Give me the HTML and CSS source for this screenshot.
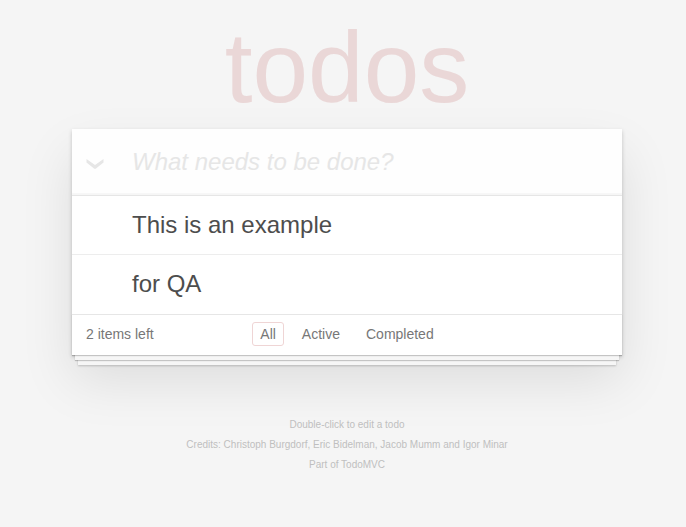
FILE: index.html
```html
<!DOCTYPE html>
<html lang="en">
<head>
<meta charset="utf-8">
<meta name="viewport" content="width=device-width, initial-scale=1">
<title>TodoMVC</title>
<link rel="stylesheet" href="styles.css">
</head>
<body>
<section class="todoapp">
  <h1 class="title">todos</h1>
  <div class="card">
    <header class="entry">
      <button class="toggle-all" type="button" aria-label="Mark all as complete">
        <svg width="18" height="11" viewBox="0 0 18 11" aria-hidden="true"><path d="M0.5 0 L9 6 L17.5 0 V3.5 L10 9.5 Q9 10.3 8 9.5 L0.5 3.5 Z" fill="#e6e6e6"/></svg>
      </button>
      <input class="new-todo" type="text" placeholder="What needs to be done?" aria-label="New todo">
    </header>
    <ul class="todo-list">
      <li class="todo">This is an example</li>
      <li class="todo">for QA</li>
    </ul>
    <footer class="footer">
      <span class="count">2 items left</span>
      <nav class="filters">
        <a class="filter selected" href="#all">All</a>
        <a class="filter" href="#active">Active</a>
        <a class="filter" href="#completed">Completed</a>
      </nav>
    </footer>
  </div>
</section>
<footer class="info">
  <p>Double-click to edit a todo</p>
  <p>Credits: <a href="#christoph">Christoph Burgdorf</a>, <a href="#eric">Eric Bidelman</a>, <a href="#jacob">Jacob Mumm</a> and <a href="#igor">Igor Minar</a></p>
  <p>Part of <a href="#todomvc">TodoMVC</a></p>
</footer>
</body>
</html>
```
FILE: styles.css
```css
* {
  box-sizing: border-box;
}

body {
  margin: 0;
  padding-left: 8px;
  background: #f5f5f5;
  color: #4d4d4d;
  font: 14px/20px "Liberation Sans", Arial, sans-serif;
}

.todoapp,
.info {
  max-width: 550px;
  margin: 0 auto;
}

.title {
  margin: 0;
  padding: 11px 0 6px;
  color: #ead7d7;
  font-size: 100px;
  font-weight: 400;
  line-height: 112px;
  text-align: center;
}

.card {
  background: #fff;
  box-shadow: 0 2px 4px rgba(0, 0, 0, 0.2), 0 25px 50px rgba(0, 0, 0, 0.1);
}

.entry {
  display: flex;
  height: 66px;
  background: #fefefe;
  box-shadow: inset 0 -2px 1px rgba(0, 0, 0, 0.03);
}

.toggle-all {
  display: grid;
  place-items: center;
  width: 46px;
  margin: 0;
  padding: 4px 0 0;
  border: 0;
  background: none;
}

.new-todo {
  flex: 1;
  min-width: 0;
  padding: 0 14px;
  border: 0;
  outline: 0;
  background: none;
  color: inherit;
  font: 24px/34px "Liberation Sans", Arial, sans-serif;
}

.new-todo::placeholder {
  color: #e6e6e6;
  font-style: italic;
  opacity: 1;
}

.todo-list {
  margin: 0;
  padding: 0 0 1px;
  border-top: 1px solid #e6e6e6;
  list-style: none;
}

.todo {
  padding: 15px 60px;
  font-size: 24px;
  line-height: 28px;
}

.todo + .todo {
  border-top: 1px solid #ededed;
}

.footer {
  display: grid;
  grid-template-columns: 1fr auto 1fr;
  align-items: center;
  padding: 7px 14px 9px;
  border-top: 1px solid #e6e6e6;
  color: #777;
  box-shadow: 0 1px 1px rgba(0, 0, 0, 0.2), 0 8px 0 -3px #f6f6f6,
    0 9px 1px -3px rgba(0, 0, 0, 0.2), 0 16px 0 -6px #f6f6f6,
    0 17px 2px -6px rgba(0, 0, 0, 0.2);
}

.filters {
  display: flex;
  gap: 10px;
}

.filter {
  padding: 1px 7px;
  border: 1px solid transparent;
  border-radius: 3px;
  color: inherit;
  text-decoration: none;
}

.filter.selected {
  border-color: #efd5d5;
}

.info {
  margin-top: 60px;
  color: #bfbfbf;
  font-size: 10px;
  text-align: center;
}

.info p {
  margin: 0;
}

.info a {
  color: inherit;
  text-decoration: none;
}
```
